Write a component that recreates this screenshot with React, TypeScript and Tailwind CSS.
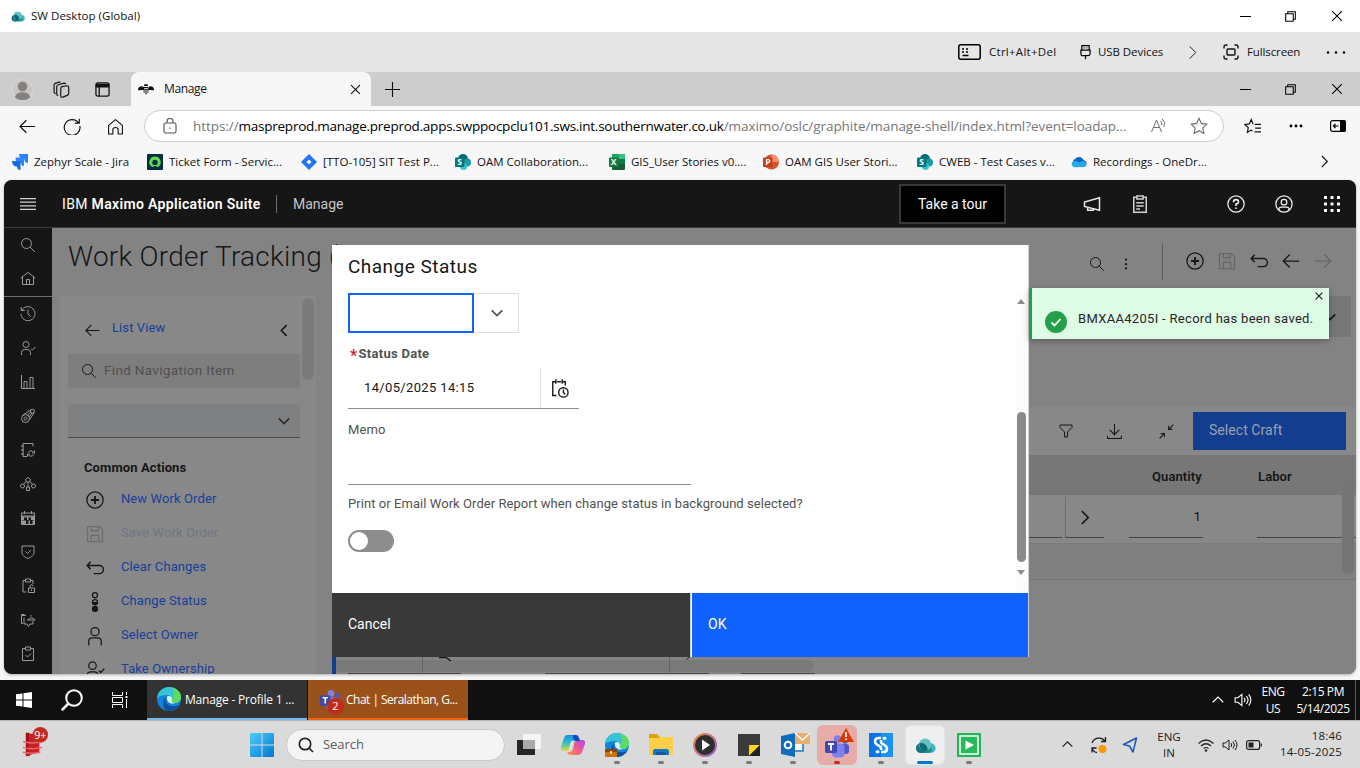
import React from "react";

type P = { className?: string; children?: React.ReactNode };

/* 32-unit line icon */
const L = ({ className = "size-5", w = 2, children }: P & { w?: number }) => (
  <svg viewBox="0 0 32 32" className={`shrink-0 ${className}`} fill="none" stroke="currentColor" strokeWidth={w}>
    {children}
  </svg>
);
/* 16-unit line icon */
const S = ({ className = "size-4", w = 1, children }: P & { w?: number }) => (
  <svg viewBox="0 0 16 16" className={`shrink-0 ${className}`} fill="none" stroke="currentColor" strokeWidth={w}>
    {children}
  </svg>
);

const Search = (p: P) => <L {...p}><circle cx="13" cy="13" r="10" /><path d="M20.5 20.5 29.5 29.5" /></L>;
const Home = (p: P) => <L {...p}><path d="M1.5 14 16 3 30.5 14M5 12v15h22V12M13 27V17h6v10" /></L>;
const History = (p: P) => <L {...p}><path d="M2.500 2v7h7M3.500 9A14 14 0 1 1 2 16M16 7v9l5.500 5.500" /></L>;
const UserCheck = (p: P) => <L {...p}><circle cx="12" cy="9" r="6" /><path d="M3 30v-5a6 6 0 0 1 6-6h6a6 6 0 0 1 6 6v5M22 17l3 3 6-6" /></L>;
const Bars = (p: P) => <L {...p}><path d="M3 2v27h27M8 29V15h6v14M20 29V7h6v22" /></L>;
const Rocket = (p: P) => <L {...p}><circle cx="11" cy="21" r="8" /><circle cx="11" cy="21" r="3" /><path d="M5 15 22 3.500M18.500 24 28.500 9" /><circle cx="25" cy="6.500" r="4" /><path d="M15 14l7-6M18 18l6-8" /></L>;
const NoteSync = (p: P) => <L {...p}><path d="M26 9V3H6v26h8M2 8h6M2 16h6M2 24h6M29 17v5h-5M15 29v-5h5M28 21a7 7 0 0 0-12 0M16 25a7 7 0 0 0 12 0" /></L>;
const Nodes = (p: P) => <L {...p}><path d="m16 3 5 4-2 5h-6l-2-5zM16 12v10M12 11l-5 6M20 11l5 6" /><circle cx="5" cy="20" r="4" /><circle cx="27" cy="20" r="4" /><path d="M13 22h6v7h-6z" /></L>;
const Calendar = (p: P) => (
  <L {...p}><path d="M3 6h26v23H3zM9 2v6M23 2v6M3 12h26" /><path d="M4 13h24v2H4zM4 15h4v5H4zM14 15h3v5h-3zM22 15h6v5h-6zM4 21h8v7H4zM17 21h3v7h-3zM25 21h3v7h-3z" fill="currentColor" stroke="none" /></L>
);
const Shield = (p: P) => <L {...p}><path d="M4 4h24v13c0 6-5 9-12 12C9 26 4 23 4 17zM11 15l4 4 7-7" /></L>;
const ClipLock = (p: P) => <L {...p}><path d="M13 28H6V5h5M21 5h5v7M11 2h10v6H11zM17 20h12v9H17zM20 20v-3a3 3 0 0 1 6-1M23 23v3" /></L>;
const ChatHat = (p: P) => <L {...p}><path d="M12 7H3v16h3M3 7v-2h6M8 11v13h6l3 5 3-5h6v-6M14 16h17M16 16a7 7 0 0 1 13 0M22 6v3" /></L>;
const ClipCheck = (p: P) => <L {...p}><path d="M11 5H5v24h22V5h-6M11 2h10v6H11zM11 18l4 4 7-7" /></L>;
const Clip = (p: P) => <L {...p} w={2.4}><path d="M11 5H6v24h20V5h-5M11 3h10v5H11zM10 14h12M10 19h12M10 24h6" /></L>;
const ArrowL = (p: P) => <L {...p}><path d="M29 16H4M14 5.500 3.500 16 14 26.500" /></L>;
const ArrowR = (p: P) => <L {...p}><path d="M3 16h25M18 5.500 28.500 16 18 26.500" /></L>;
const AddAlt = (p: P) => <L {...p}><circle cx="16" cy="16" r="13" /><path d="M16 9.500v13M9.500 16h13" strokeWidth="3" /></L>;
const Save = (p: P) => <L {...p}><path d="M5 4h18l5 5v19H4V5zM10 4v7h11V4M10 28V18h12v10" /></L>;
const Undo = (p: P) => <L {...p} w={2.300}><path d="M9 6 3.500 12 9 18M4 12h19a6 6 0 0 1 0 13h-9" /></L>;
const ChevL = (p: P) => <L {...p} w={3}><path d="M20 6 10 16l10 10" /></L>;
const ChevD = (p: P) => <L {...p} w={4}><path d="m4 10 12 12 12-12" /></L>;
const ChevR = (p: P) => <L {...p} w={3}><path d="m11 4 12 12-12 12" /></L>;
const X = (p: P & { w?: number }) => <S {...p}><path d="m2.500 2.500 11 11M13.500 2.500l-11 11" /></S>;

const Cloud = ({ className = "" }: P) => (
  <svg viewBox="0 0 24 18" className={`shrink-0 ${className}`}>
    <circle cx="18" cy="12" r="5.500" fill="#3fb5bd" />
    <rect x="3" y="10" width="16" height="7.500" rx="3.700" fill="#1e8e97" />
    <circle cx="6.500" cy="12" r="5.500" fill="#127580" />
    <circle cx="11.500" cy="8" r="7" fill="#62bfc4" />
    <path d="M5 6.500a7 7 0 0 1 9 8.500c-5 2-9-2-9-8.500z" fill="#0f6973" />
  </svg>
);
const Edge = ({ className = "" }: P) => (
  <svg viewBox="0 0 24 24" className={`shrink-0 ${className}`}>
    <circle cx="12" cy="12" r="12" fill="#1583d8" />
    <path d="M0 11C1 4 6 0 12 0c7 0 12 5 12 10 0 4-3 6-6 6-4 0-4-2-3-3 1-2-1-5-5-5-4 0-8 1-10 3z" fill="#36c4d8" />
    <path d="M15 .5c6 1.500 9 5.500 9 9.500s-3 6-6 6c-4 0-4-2-3-3 2-3 3-8 0-12.500z" fill="#5fdb60" />
    <path d="M9 10c-2 6 3 12 13 8-3 5-8 6-11 6-5-1-7-9-2-14z" fill="#0c4f9c" />
    <path d="M10 9.500c3-1.500 6 1 5 3.500-1 1 0 3 3 3-3 1.500-9 0-8-6.500z" fill="#d8f0fa" />
  </svg>
);
const Teams = ({ className = "" }: P) => (
  <svg viewBox="0 0 24 24" className={`shrink-0 ${className}`}>
    <circle cx="20" cy="7" r="2.800" fill="#4f57c9" /><circle cx="12.500" cy="5" r="3.800" fill="#7b83eb" />
    <rect x="16" y="10" width="8" height="10" rx="3" fill="#4f57c9" /><rect x="7" y="9.500" width="12.500" height="14" rx="4" fill="#7b83eb" />
    <rect x="0" y="7" width="12" height="12" rx="1.500" fill="#4049b0" />
    <path d="M3 10h6M6 10v6.500" stroke="#fff" strokeWidth="1.800" />
  </svg>
);
const Win = ({ className = "" }: P) => (
  <svg viewBox="0 0 24 24" className={`shrink-0 ${className}`}>
    <defs><linearGradient id="wn" x1="0" y1="0" x2="1" y2="1"><stop stopColor="#4fcbf8" /><stop offset="1" stopColor="#0078d4" /></linearGradient></defs>
    <path d="M0 1Q0 0 1 0h10.500v11.500H0zM12.500 0H23q1 0 1 1v10.500H12.500zM0 12.500h11.500V24H1q-1 0-1-1zM12.500 12.500H24V23q0 1-1 1H12.500z" fill="url(#wn)" />
  </svg>
);
const Speaker = (p: P) => <S {...p}><path d="M1 6v4h2.500L7 13V3L3.500 6zM9 6q1.500 2 0 4M11 4.500q3 3.500 0 7M13 3q4 5 0 10" /></S>;

const JiraIcon = () => (
  <svg viewBox="0 0 16 16" className="size-4 shrink-0"><path d="M7 0h9v9c-2.500 0-3.500-1.500-3.500-3.500H11C9 5.500 7 3 7 0z" fill="#2684ff" /><path d="M3.500 3.500h8.500v8.500C9.500 12 9 10.500 9 9H7C5 9 3.500 6.500 3.500 3.500z" fill="#2f86f8" /><path d="M0 7h8.500v9C6 16 5 14.500 5 12.500H3.500C1.500 12 0 10 0 7z" fill="#1b6ae0" /></svg>
);
const TicketIcon = () => (
  <svg viewBox="0 0 16 16" className="size-4 shrink-0"><rect width="16" height="16" rx="1" fill="#032d42" /><path d="M8 2.500a5.700 5.700 0 0 0-4.200 9.600q.8 1.200 2 .6 1-.7 2.200-.7t2.200.7q1.200.6 2-.6A5.700 5.700 0 0 0 8 2.500z" fill="#62d84e" /><circle cx="8" cy="8.400" r="2.700" fill="#032d42" /></svg>
);
const JiraDiamond = () => (
  <svg viewBox="0 0 16 16" className="size-4 shrink-0"><path d="M8 0l8 8-8 8-8-8z" fill="#2075f5" /><path d="M8 5.500 10.500 8 8 10.500 5.500 8z" fill="#f7f7f7" /></svg>
);
const Letter = ({ x, y, c }: { x: number; y: number; c: string }) => (
  <text x={x} y={y} fill="#fff" fontSize="8.500" fontWeight="700" fontFamily="Open Sans, sans-serif" textAnchor="middle">{c}</text>
);
const SharePoint = () => (
  <svg viewBox="0 0 16 16" className="size-4 shrink-0"><circle cx="8" cy="5" r="5" fill="#036c70" /><circle cx="12" cy="8.500" r="4" fill="#1a9ba1" /><circle cx="8.500" cy="12.500" r="3.500" fill="#37c6d0" /><rect y="3.500" width="9.500" height="9.500" rx="1" fill="#03787c" /><Letter x={4.700} y={11.300} c="S" /></svg>
);
const Excel = () => (
  <svg viewBox="0 0 16 16" className="size-4 shrink-0"><rect x="3" width="13" height="16" rx="1" fill="#185c37" /><path d="M3 0h7v5H3z" fill="#21a366" /><path d="M10 0h6v5h-6z" fill="#33c481" /><path d="M10 5h6v5h-6z" fill="#107c41" /><rect y="3.500" width="9.500" height="9.500" rx="1" fill="#107c41" /><Letter x={4.700} y={11.300} c="X" /></svg>
);
const Ppt = () => (
  <svg viewBox="0 0 16 16" className="size-4 shrink-0"><circle cx="8.500" cy="8" r="7.500" fill="#d35230" /><path d="M8.500.5A7.500 7.500 0 0 1 16 8H8.500z" fill="#ff8f6b" /><rect y="3.500" width="9.500" height="9.500" rx="1" fill="#c43e1c" /><Letter x={4.900} y={11.300} c="P" /></svg>
);
const OneDrive = () => (
  <svg viewBox="0 0 16 16" className="size-4 shrink-0"><path d="M3 11a3.500 3.500 0 0 1 1-6 5 5 0 0 1 8.500 1 3.500 3.500 0 0 1 2 6z" fill="#0a66c2" /><path d="M3.300 13.200a3.200 3.200 0 0 1-1-6Q5 6 8 8.500l4-1.500a3.200 3.200 0 0 1 1.500 6z" fill="#28a8ea" /></svg>
);

const bookmarks: { icon: React.ReactNode; text: string; cls: string }[] = [
  { icon: <JiraIcon />, text: "Zephyr Scale - Jira", cls: "w-[135px]" },
  { icon: <TicketIcon />, text: "Ticket Form - Servic...", cls: "w-[154px]" },
  { icon: <JiraDiamond />, text: "[TTO-105] SIT Test P...", cls: "w-[154px]" },
  { icon: <SharePoint />, text: "OAM Collaboration...", cls: "w-[154px]" },
  { icon: <Excel />, text: "GIS_User Stories v0....", cls: "w-[154px]" },
  { icon: <Ppt />, text: "OAM GIS User Stori...", cls: "w-[154px]" },
  { icon: <SharePoint />, text: "CWEB - Test Cases v...", cls: "w-[154px]" },
  { icon: <OneDrive />, text: "Recordings - OneDr...", cls: "w-[154px]" },
];

const WindowButtons = () => (
  <div className="flex w-[138px] items-center justify-around text-black">
    <S className="size-[11px]" w={1.500}><path d="M0 8h16" /></S>
    <S className="size-[11px]" w={1.500}><path d="M1 4h11v11H1zM4 4V1h11v11h-3" /></S>
    <X className="size-[14px]" w={1.200} />
  </div>
);

const TopBars = () => (
  <>
    <div className="flex h-8 items-center justify-between bg-white">
      <div className="flex items-center gap-[6px] pl-[11px]">
        <Cloud className="h-[11px] w-[14px]" />
        <span className="text-[11.500px] tracking-[0.030px]">SW Desktop (Global)</span>
      </div>
      <div className="-mr-px flex"><WindowButtons /></div>
    </div>
    <div className="flex h-10 items-center bg-[#e5e5e5] pl-[958px] text-[11.500px]">
      <svg viewBox="0 0 23 16" className="h-4 w-[23px]" fill="none" stroke="#000" strokeWidth="1.500"><rect x=".8" y=".8" width="21.400" height="14.400" rx="2" /><path d="M4 5h2M8 5h2M4 8h2M8 8h2M4.500 11.500h6" /></svg>
      <span className="ml-[8px] w-[91px] tracking-[0.270px]">Ctrl+Alt+Del</span>
      <svg viewBox="0 0 12 16" className="h-4 w-[11px]" fill="none" stroke="#000" strokeWidth="1.300"><path d="M2 6V1h8v5M1 6h10v4q0 2-2 2H3q-2 0-2-2zM6 12v4M4 3.500h1M7 3.500h1" /></svg>
      <span className="ml-[7px] w-[88px] tracking-[-0.070px]">USB Devices</span>
      <L className="-ml-px size-[15px]" w={2}><path d="m10 3 13 13-13 13" /></L>
      <S className="ml-[23px] size-4" w={1.400}><path d="M1 4.500V3q0-2 2-2h1.500M11.500 1H13q2 0 2 2v1.500M15 11.500V13q0 2-2 2h-1.500M4.500 15H3q-2 0-2-2v-1.500" /><rect x="4" y="5" width="8" height="6" rx="1" /></S>
      <span className="ml-[8px] w-[79px] tracking-[-0.120px]">Fullscreen</span>
      <svg viewBox="0 0 20 4" className="h-1 w-5"><circle cx="2" cy="2.500" r="1.200" /><circle cx="10" cy="2.500" r="1.200" /><circle cx="18" cy="2.500" r="1.200" /></svg>
    </div>
  </>
);

const Browser = () => (
  <>
    <div className="flex h-[34px] bg-[#cdcdcd]">
      <div className="flex w-[131px] items-center pl-[12px]">
        <svg viewBox="0 0 22 22" className="size-[21px]"><circle cx="11" cy="11" r="10.500" fill="#c9c6c3" stroke="#d9d9d9" /><circle cx="11" cy="8" r="5" fill="#85817e" /><path d="M3 19q1-5 8-5t8 5q-3 3-8 3t-8-3z" fill="#85817e" /></svg>
        <S className="ml-[20px] size-[17px]" w={1.100}><path d="M7.500 5.500 13 4.500q1.800 0 1.800 1.500v5.500q0 1.500-1.500 2l-4 1.700q-2 .5-2-1.500V7q0-1.500 1.500-1.800M5 13.500q-1.800 0-1.500-2V5.500q0-1.500 1.500-2l5.500-1.500q1.500 0 1.500 1M2.500 12Q.8 11.500 1 9.500V4q0-1.500 1.500-2L7 .8" /></S>
        <S className="ml-[25px] size-[15px]" w={1.400}><rect x="1" y="1" width="14" height="14" rx="2" /><path d="M1 3h14M1 4.500h14" strokeWidth="2.500" /><path d="M4.500 4v11" /></S>
      </div>
      <div className="flex w-[240px] items-center rounded-t-lg bg-[#f7f7f7] pl-[7px]">
        <svg viewBox="0 0 16 12" className="h-3 w-4" fill="#111"><path d="M0 6Q1 2 6 4v2Q3 8 0 7zM16 6q-1-4-6-2v2q3 2 6 1zM6 2q2-2 4 0v1H6zM5.500 4h5v1.200h-5zM5 6.200h6v1.200H5zM5.500 8.400h5v1h-5zM7 10.200h2l-1 1.500z" /></svg>
        <span className="ml-[10px] w-[185px] text-[12px] tracking-[-0.350px]">Manage</span>
        <X className="size-[13px]" w={1.400} />
      </div>
      <S className="ml-[14px] mt-[10px] size-[15px]" w={1.200}><path d="M8 0v16M0 8h16" /></S>
      <div className="-mr-px ml-auto flex"><WindowButtons /></div>
    </div>
    <div className="flex h-10 items-center bg-[#f7f7f7] pl-[18px]">
      <ArrowL className="size-[19px]" />
      <S className="ml-[26px] size-[18px]" w={1.050}><path d="M14 5.500A7 7 0 1 0 15 8M14.500 1.500V5.500h-4" /></S>
      <S className="ml-[26px] size-[17px]" w={1.050}><path d="M1.500 7 8 1.500 14.500 7v8h-4v-4q0-2-2.500-2t-2.500 2v4h-4z" strokeLinejoin="round" /></S>
      <div className="ml-[20px] flex h-8 w-[1080px] items-center rounded-full border border-[#cfcfcf] bg-white pl-[17px]">
        <S className="size-[16px] text-[#555]" w={1.100}><rect x="2" y="5" width="12" height="10" rx="1.500" /><path d="M5 5V3.500q0-3 3-3t3 3V5M8 9.500v1.500" /></S>
        <span className="ml-[15px] w-[958px] whitespace-nowrap text-[13.500px] tracking-[-0.060px] text-[#767676]">https://<span className="tracking-[-0.250px] text-black">maspreprod.manage.preprod.apps.swppocpclu101.sws.int.southernwater.co.uk</span>/maximo/oslc/graphite/manage-shell/index.html?event=loadap...</span>
        <svg viewBox="0 0 16 16" className="size-4 shrink-0" fill="none" stroke="#6b6b6b"><path d="M.5 14 5.500 2l5 12M2.500 9.500h6M9.500 3q2 1.500 1 4M11 .8q4 3 2 8M13 0" /></svg>
        <S className="ml-[23px] size-[18px] text-[#6b6b6b]"><path d="m8 1.200 2.100 4.500 4.900.6-3.600 3.400.9 4.900L8 12.200l-4.300 2.400.9-4.900L1 6.300l4.900-.6z" /></S>
      </div>
      <S className="ml-[20px] size-[17px]" w={1.100}><path d="M8.500 5.800 6.800 1.500 5 5.500.8 6l3.200 3-.8 4.600 3.600-2.200L8 12M10 6h6M10.500 9.500H16M10 13h6" /></S>
      <svg viewBox="0 0 14 4" className="ml-[28px] h-1 w-[14px]"><circle cx="2" cy="2" r="1.400" /><circle cx="7" cy="2" r="1.400" /><circle cx="12" cy="2" r="1.400" /></svg>
      <svg viewBox="0 0 16 12" className="ml-[27px] h-3 w-4"><rect x=".6" y=".6" width="14.800" height="10.800" rx="2" fill="none" stroke="#000" strokeWidth="1.200" /><path d="M10 0h4q2 0 2 2v8q0 2-2 2h-4z" /><path d="M8.500 6H3.500M5.500 4l-2 2 2 2" fill="none" stroke="#000" strokeWidth="1.200" /></svg>
    </div>
    <div className="flex h-[34px] items-center bg-[#f7f7f7] pb-[3px] pl-[12px]">
      {bookmarks.map((b) => (
        <div key={b.text} className={`flex items-center gap-[6px] ${b.cls}`}>
          {b.icon}
          <span className="whitespace-nowrap text-[11.500px] tracking-[0.010px]">{b.text}</span>
        </div>
      ))}
      <L className="ml-[92px] size-[15px]" w={2.500}><path d="m10 4 12 12-12 12" /></L>
    </div>
  </>
);

const AppHeader = () => (
  <div className="flex h-12 shrink-0 items-center border-b border-[#393939] bg-[#161616] pl-4 text-[14px] text-[#c6c6c6]">
    <svg viewBox="0 0 16 12" className="h-3 w-4 text-[#d0d0d0]" stroke="currentColor" strokeWidth="1.300"><path d="M0 .6h16M0 4.200h16M0 7.800h16M0 11.400h16" /></svg>
    <span className="ml-[26px] w-[214px] whitespace-nowrap pt-[2px] tracking-[0.340px] text-white">IBM <b className="font-semibold">Maximo Application Suite</b></span>
    <span className="h-[18px] w-px bg-[#6f6f6f]" />
    <span className="ml-4 w-[606px] pt-[2px]">Manage</span>
    <button className="flex h-10 w-[107px] items-center justify-center border-2 border-[#393939] bg-black pt-[2px] text-white">Take a tour</button>
    <L className="ml-[76px] size-5 text-[#e8e8e8]" w={2.400}><path d="M28 6v20L4 20v-7zM9 21v5h9v-3" /></L>
    <Clip className="ml-[28px] size-5 text-[#d0d0d0]" />
    <L className="ml-[76px] size-5 text-[#f0f0f0]"><circle cx="16" cy="16" r="13" /><path d="M12 13q0-4 4-4t4 3.500q0 3-4 3.500v3M16 21.500v2.500" strokeWidth="2.500" /></L>
    <L className="ml-[28px] size-5 text-[#f0f0f0]"><circle cx="16" cy="16" r="13" /><circle cx="16" cy="13" r="4.500" /><path d="M8 26v-2q0-3 4-3h8q4 0 4 3v2" /></L>
    <svg viewBox="0 0 16 16" className="ml-[30px] size-4" fill="#f4f4f4"><path d="M0 0h3v3H0zM6.500 0h3v3h-3zM13 0h3v3h-3zM0 6.500h3v3H0zM6.500 6.500h3v3h-3zM13 6.500h3v3h-3zM0 13h3v3H0zM6.500 13h3v3h-3zM13 13h3v3h-3z" /></svg>
  </div>
);

const railTop = [Search, Home];
const rail = [History, UserCheck, Bars, Rocket, NoteSync, Nodes, Calendar, Shield, ClipLock, ChatHat, ClipCheck];

const Rail = () => (
  <div className="w-12 shrink-0 bg-[#161616] text-[#9a9a9a]">
    {railTop.map((I, i) => <div key={i} className="flex h-[34px] items-center justify-center"><I className="size-4" /></div>)}
    <div className="h-px bg-[#6f6f6f]" />
    {rail.map((I, i) => <div key={i} className="flex h-[34px] items-center justify-center"><I className="size-4" /></div>)}
  </div>
);

const Status = (p: P) => <L {...p}><circle cx="16" cy="5" r="4" /><circle cx="16" cy="16" r="4" /><circle cx="16" cy="27" r="5" fill="currentColor" stroke="none" /><path d="M11 16h10a5 5 0 0 1-10 0z" fill="currentColor" stroke="none" /></L>;
const User = (p: P) => <L {...p}><circle cx="16" cy="9" r="6.500" /><path d="M6 31v-6q0-6 6-6h8q6 0 6 6v6" /></L>;

const actions: [React.FC<P>, string, string, string][] = [
  [AddAlt, "New Work Order", "text-[#161616]", "text-[#163f9c]"],
  [Save, "Save Work Order", "text-[#6c6c6c]", "text-[#6f7686]"],
  [Undo, "Clear Changes", "text-[#161616]", "text-[#163f9c]"],
  [Status, "Change Status", "text-[#161616]", "text-[#163f9c]"],
  [User, "Select Owner", "text-[#161616]", "text-[#163f9c]"],
  [UserCheck, "Take Ownership", "text-[#161616]", "text-[#163f9c]"],
];

const NavPanel = () => (
  <div className="flex w-[256px] shrink-0 overflow-hidden bg-[#888888]">
    <div className="w-[240px] pl-2 text-[13px] tracking-[0.100px]">
      <div className="flex h-[58px] items-center pl-4 pt-[6px]">
        <ArrowL className="mt-1 size-[17px]" />
        <span className="ml-[11px] w-[164px] text-[#163f9c]">List View</span>
        <ChevL className="mt-1 size-[17px]" />
      </div>
      <div className="flex h-[34px] items-center bg-[#7e7e7e] pb-[2px] pl-[13px] text-[13.500px] tracking-[0.330px] text-[#505050]">
        <Search className="mr-[7px] mt-[2px] size-[16px] text-[#161616]" />Find Navigation Item
      </div>
      <div className="mt-4 flex h-[34px] items-center justify-end border-b border-[#4c4c4c] bg-[#7f8082] pr-[9px]"><ChevD className="size-[14px] text-[#2c2c2c]" /></div>
      <div className="flex h-[44px] items-center pl-4 pt-[16px] font-bold text-[#161616]">Common Actions</div>
      {actions.map(([I, label, ic, tc]) => (
        <div key={label} className="flex h-[34px] items-center pl-[17px]">
          <I className={`mt-[1px] size-5 ${ic}`} />
          <span className={`ml-[16px] ${tc}`}>{label}</span>
        </div>
      ))}
    </div>
    <div className="ml-[2px] mt-[2px] h-[82px] w-3 rounded-full bg-[#7b7b7b]" />
  </div>
);

const Table = () => (
  <div className="ml-4 flex flex-1 flex-col">
    <div className="mr-[5px] flex h-[41px] items-center justify-end bg-[#767676] pr-[14px]"><ChevD className="size-[14px]" /></div>
    <div className="mt-[70px] flex h-12 items-center bg-[#888888] pl-[726px]">
      <L className="size-4"><path d="M4 4h24v5l-9 9v10h-6V18L4 9z" /></L>
      <L className="ml-[32px] size-[17px]"><path d="M16 2v20M7 13l9 9 9-9M3 24v5h26v-5" /></L>
      <L className="ml-[35px] size-[17px]"><path d="M29 3 20 12M20 5v7h7M3 29l9-9M12 27v-7H5" /></L>
      <div className="ml-[18px] flex h-[38px] w-[153px] items-center bg-[#133d8e] pb-px pl-4 text-[14px] tracking-[0.060px] text-[#9aa2b2]">Select Craft</div>
    </div>
    <div className="flex h-10 items-center bg-[#777777] pl-[820px] pt-1 text-[13px] font-semibold tracking-[0.100px] text-[#161616]">
      <span className="w-[106px]">Quantity</span><span>Labor</span>
    </div>
    <div className="flex h-[49px] items-start border-b border-[#7b7b7b] bg-[#888888] pl-[697px]">
      <div className="h-[43px] w-[33px] border-b border-[#444]" />
      <div className="ml-[3px] mt-0.5 flex h-[41px] w-[39px] items-center border-b border-l border-b-[#444] border-l-[#6f6f6f] pl-[10px]"><ChevR className="size-[17px]" /></div>
      <div className="ml-[25px] flex h-[43px] w-[74px] items-center justify-end border-b border-[#444] pr-[2px] text-[13.500px]">1</div>
      <div className="ml-[54px] h-[43px] flex-1 border-b border-[#444]" />
    </div>
    <div className="h-[36px] border-b border-[#73737b] bg-[#808080]" />
    <div className="mt-auto flex h-[17px] items-start bg-[#848484]">
      <div className="h-full w-1 bg-[#133d8e]" />
      <div className="mt-[3px] flex h-3 w-[478px] rounded-r-full bg-[#7a7a7a]">
        <div className="-mt-[3px] ml-3 flex h-[17px] w-[467px]">
          <div className="h-full w-[75px] border-b border-r border-b-[#444] border-r-[#666]" />
          <div className="flex h-full w-[38px] items-start border-b border-[#444] pl-4"><svg viewBox="0 0 14 4" className="h-1 w-[14px]" fill="none" stroke="#161616"><path d="M0 .5h7l5 3.500" strokeWidth="1.400" /></svg></div>
          <div className="ml-[84px] h-full w-[125px] border-b border-r border-b-[#444] border-r-[#666]" />
          <div className="h-full w-[39px] border-b border-[#444] pl-[16px]"><svg viewBox="0 0 4 3" className="h-[3px] w-1" stroke="#161616"><path d="M3.500 0 .5 2.500" /></svg></div>
          <div className="ml-8 h-full w-[74px] border-b border-[#444]" />
        </div>
      </div>
    </div>
  </div>
);

const Modal = () => (
  <div className="absolute left-[328px] top-[65px] flex h-[412px] w-[697px] flex-col border-r border-[#d0d0d0] bg-white text-[13px] text-[#525252]">
    <div className="flex h-12 items-start pl-4 pt-[8px] text-[19px] leading-7 tracking-[0.480px] text-[#161616]">Change Status</div>
    <div className="flex h-[300px]">
      <div className="w-[683px] pl-4">
        <div className="flex h-10">
          <div className="w-[126px] border-2 border-[#0f62fe]" />
          <div className="ml-[3px] flex w-[42px] items-center justify-center border border-l-0 border-[#e0e0e0] pr-[2px]"><ChevD className="size-[14px]" /></div>
        </div>
        <div className="mt-[11px] flex h-5 items-center pl-[2px] font-bold leading-5 tracking-[0.280px]"><span className="mr-[1px] mt-1 text-[16px] leading-5 text-[#da1e28]">*</span>Status Date</div>
        <div className="mt-1 flex h-[41px] w-[231px] border-b border-[#8d8d8d] text-[#161616]">
          <div className="flex w-[193px] items-center border-r border-[#e0e0e0] pl-4 tracking-[0.350px]">14/05/2025 14:15</div>
          <L className="ml-[8px] mt-[10px] size-5" w={2.200}><path d="M12 28H6V6h5M21 6h5v6M11 2v7M21 2v7M13 6h6" /><circle cx="23" cy="23" r="7.500" /><path d="M23 18.500V23l3 3" /></L>
        </div>
        <div className="mt-[11px] h-5 leading-5 tracking-[0.150px]">Memo</div>
        <div className="h-[45px] w-[343px] border-b border-[#8d8d8d]" />
        <div className="mt-[9px] h-5 whitespace-nowrap leading-5 tracking-[0.060px]">Print or Email Work Order Report when change status in background selected?</div>
        <div className="mt-[16px] h-[22px] w-[46px] rounded-full bg-[#8d8d8d] p-[2px]"><div className="size-[18px] rounded-full bg-white" /></div>
      </div>
      <div className="flex w-3 flex-col items-center bg-[#fcfcfc]">
        <svg viewBox="0 0 8 5" className="mt-[6px] h-[5px] w-2 shrink-0" fill="#8b8b8b"><path d="M4 0l4 5H0z" /></svg>
        <div className="mt-[108px] h-[150px] w-[9px] shrink-0 rounded-full bg-[#8b8b8b]" />
        <svg viewBox="0 0 8 5" className="mt-[8px] h-[5px] w-2 shrink-0" fill="#8b8b8b"><path d="M4 5L0 0h8z" /></svg>
      </div>
    </div>
    <div className="flex h-16 text-[14px] text-white">
      <div className="flex w-[359px] items-center border-r border-[#c6c6c6] bg-[#393939] pb-[2px] pl-4">Cancel</div>
      <div className="ml-px flex flex-1 items-center bg-[#0f62fe] pb-[2px] pl-4">OK</div>
    </div>
  </div>
);

const Toast = () => (
  <div className="absolute left-[1025px] top-[108px] flex h-[51px] w-[300px] border-l-[3px] border-[#24a148] bg-[#defbe6] shadow-[0_2px_6px_rgba(0,0,0,0.3)]">
    <svg viewBox="0 0 22 22" className="ml-[13px] mt-[23px] size-[22px]"><circle cx="11" cy="11" r="11" fill="#24a148" /><path d="m6.500 11.500 3 3 6-6.500" fill="none" stroke="#fff" strokeWidth="1.800" /></svg>
    <span className="ml-[11px] mt-[21px] w-[236px] shrink-0 whitespace-nowrap text-[13px] leading-5 tracking-[0.310px] text-[#262626]">BMXAA4205I - Record has been saved.</span>
    <X className="mt-[3px] size-[10px] shrink-0" w={1.700} />
  </div>
);

const Maximo = () => (
  <div className="flex h-[500px] flex-col bg-[#f7f7f7] px-1 pb-[6px] font-[Roboto,sans-serif]">
    <div className="relative flex flex-1 flex-col overflow-hidden rounded-lg bg-[#838383] text-[#161616] shadow-[0_1px_3px_rgba(0,0,0,0.3)]">
      <AppHeader />
      <div className="flex h-[446px]">
        <Rail />
        <div className="flex flex-1 flex-col">
          <div className="flex h-[68px] shrink-0 items-start">
            <div className="w-[990px] whitespace-nowrap pl-4 pt-[11px] text-[28px] font-light leading-9 tracking-[0.250px]">Work Order Tracking (</div>
            <div className="flex items-center pt-4">
              <Search className="ml-[47px] mt-1 size-4" />
              <svg viewBox="0 0 4 16" className="ml-[19px] mt-1 h-[14px] w-1"><path d="M1 2h2v2H1zM1 7h2v2H1zM1 12h2v2H1z" /></svg>
              <span className="ml-[34px] h-9 w-px bg-[#5c5c5c]" />
              <div className="-mt-[2px] ml-[22px] flex gap-3">
                <AddAlt /><Save className="size-5 text-[#666]" /><Undo /><ArrowL /><ArrowR className="size-5 text-[#666]" />
              </div>
            </div>
          </div>
          <div className="flex flex-1 overflow-hidden pl-2">
            <NavPanel />
            <Table />
          </div>
        </div>
      </div>
      <div className="absolute left-[1338px] top-[301px] h-[93px] w-3 rounded-full bg-[#747474]" />
      <Modal />
      <Toast />
    </div>
  </div>
);

const InnerTaskbar = () => (
  <div className="flex h-10 items-stretch bg-[#101010] text-[12px] text-white">
    <div className="flex w-[147px] items-center pl-4">
      <svg viewBox="0 0 16 16" className="size-4" fill="#fff"><path d="M0 2.300 6.500 1.400v6.100H0zM7.500 1.200 16 0v7.500H7.500zM0 8.500h6.500v6.100L0 13.700zM7.500 8.500H16V16l-8.500-1.200z" /></svg>
      <svg viewBox="0 0 22 22" className="ml-[29px] size-[22px]" fill="none" stroke="#fff" strokeWidth="2"><circle cx="13" cy="9" r="7.800" /><path d="M7.500 14.500.8 21.200" strokeWidth="2.500" /></svg>
      <svg viewBox="0 0 16 16" className="ml-[29px] size-4" fill="none" stroke="#fff"><path d="M.5 0v3.500h10V0M.5 16v-3.500h10V16M.5 5.500h10v5H.5zM14.500 0v3M14.500 7v9" /><path d="M13.500 4h2v2h-2z" fill="#fff" stroke="none" /></svg>
    </div>
    <div className="flex w-[160px] items-center border-b-2 border-[#76b9ed] bg-[#333333] pl-[10px]"><Edge className="size-6" /><span className="ml-1 whitespace-nowrap pt-[2px] tracking-[-0.200px]">Manage - Profile 1 ...</span></div>
    <div className="relative ml-px flex w-[160px] items-center border-b-2 border-[#f7630c] bg-[#9a511a] pl-[12px]">
      <Teams className="size-[21px]" />
      <span className="absolute left-[19px] top-[18px] flex size-[17px] items-center justify-center rounded-full bg-[#c42b1c] text-[11px]">2</span>
      <span className="ml-[5px] whitespace-nowrap pt-[2px] tracking-[-0.520px]">Chat | Seralathan, G...</span>
    </div>
    <div className="ml-auto flex items-center pb-px text-center text-[12px] leading-[17px] tracking-[-0.400px]">
      <S className="size-3" w={1.500}><path d="m1 11 7-7 7 7" /></S>
      <Speaker className="ml-[10px] size-[18px]" />
      <div className="ml-[9px] w-6">ENG<br />US</div>
      <div className="ml-[11px] w-[54px] whitespace-nowrap">2:15 PM<br />5/14/2025</div>
      <div className="ml-[5px] mr-1 mt-px h-10 w-px bg-[#5a5a5a]" />
    </div>
  </div>
);

const TaskItem = ({ children, dot = "bg-[#7a7a7a] w-[6px]", tile = "" }: P & { dot?: string; tile?: string }) => (
  <div className="relative flex h-12 w-11 items-center justify-center">
    <div className={`flex h-10 w-10 items-center justify-center rounded-md ${tile}`}>{children}</div>
    <span className={`absolute bottom-[5px] h-[3px] rounded-full ${dot}`} />
  </div>
);

const OuterTaskbar = () => (
  <div className="flex h-12 items-center border-t border-[#b5b5b5] bg-[#dadada]">
    <svg viewBox="0 0 28 32" className="-mt-1 ml-[19px] size-[31px]"><path d="M5 6h4v24H5z" fill="#a11217" /><path d="M9 7h10v19L6 30z" fill="#c62026" /><path d="M2 15q9 3 20 0M2 21q9 3 20 0M2 26q9 2 18 0" fill="none" stroke="#e56a6e" strokeWidth="1.500" /><circle cx="20" cy="8" r="8" fill="#c42b1c" /><text x="20" y="12" fill="#fff" fontSize="11" fontFamily="Open Sans, sans-serif" textAnchor="middle">9+</text></svg>
    <Win className="ml-[200px] size-[24px]" />
    <div className="ml-[12px] flex h-8 w-[219px] items-center rounded-full border border-[#cacaca] bg-[#f4f4f4] pl-[11px]">
      <S className="size-4 text-[#222]" w={1.700}><circle cx="7" cy="7" r="5.700" /><path d="m11 11 4 4" /></S>
      <span className="ml-[9px] text-[13px] tracking-[-0.050px] text-[#5c5c5c]">Search</span>
    </div>
    <div className="ml-[2px] flex">
      <TaskItem dot="hidden"><svg viewBox="0 0 24 24" className="size-6"><path d="M0 7h18v15H0z" fill="#262626" /><path d="M6 1h18v15H6z" fill="#f5f5f5" /><path d="M6 7h12v9H6z" fill="#aaa" /></svg></TaskItem>
      <TaskItem dot="hidden">
        <svg viewBox="0 0 24 24" className="size-6">
          <defs>
            <linearGradient id="cpa" x1="0" y1="0" x2="0" y2="1"><stop stopColor="#1a8be8" /><stop offset=".5" stopColor="#2fc4c4" /><stop offset="1" stopColor="#e8d63c" /></linearGradient>
            <linearGradient id="cpb" x1="1" y1="0" x2="0" y2="1"><stop stopColor="#a44df0" /><stop offset=".5" stopColor="#f05a8c" /><stop offset="1" stopColor="#fb9a48" /></linearGradient>
          </defs>
          <path d="M6 2h9q2 0 3 3l1 3h-4q-2 0-3 3l-1 4q-1 3-4 3H3q-4 0-3-4L3 5q1-3 3-3z" fill="url(#cpa)" />
          <path d="M18 22H9q-2 0-3-3h3q2 0 3-3l1-5q1-4 4-4h4q4 0 3 4l-3 8q-1 3-3 3z" fill="url(#cpb)" />
          <path d="M11 8h3q-1.500 1-2 3l-1 4q-.5 2-2 2h-2q1-1 1.500-3l1-4q.5-2 1.500-2z" fill="#e4e4e4" />
          <path d="M12 2h3q2 0 3 3l1 3h-4q-2 0-3-3z" fill="#1747c4" />
        </svg>
      </TaskItem>
      <TaskItem><svg viewBox="0 0 24 24" className="size-6"><foreignObject width="24" height="24"><Edge className="size-6" /></foreignObject><path d="M0 16h12v8H0z" fill="#c8720f" /><path d="M0 16h12v3H0z" fill="#8a4708" /><path d="M5 18h2v3H5z" fill="#ffd45c" /></svg></TaskItem>
      <TaskItem><svg viewBox="0 0 24 24" className="size-6"><path d="M0 1h8l3 3v5H0z" fill="#e0a008" /><path d="M0 6q0-1 1-1h8l2-1h12q1 0 1 1v16q0 1-1 1H1q-1 0-1-1z" fill="#ffcf48" /><path d="M4 18q0-2 2-2h12q2 0 2 2v4H4z" fill="#1378c8" /><path d="M7 19h10v3H7z" fill="#0b5a9c" /></svg></TaskItem>
      <TaskItem><svg viewBox="0 0 24 24" className="size-6"><defs><linearGradient id="mp" x1="0" y1="0" x2="1" y2="1"><stop stopColor="#f58a3c" /><stop offset="1" stopColor="#8e5bd0" /></linearGradient></defs><circle cx="12" cy="12" r="12" fill="url(#mp)" /><circle cx="12" cy="12" r="10" fill="#2e2e2e" /><path d="M9 6.500 17 12l-8 5.500z" fill="#fff" /></svg></TaskItem>
      <TaskItem><svg viewBox="0 0 24 24" className="size-6"><path d="M1 1h22v22H1z" fill="#3b3b3b" /><path d="M12 12h11L12 23z" fill="#ffd60a" /><path d="M23 12v11H12z" fill="#222" /></svg></TaskItem>
      <TaskItem><svg viewBox="0 0 30 24" className="ml-[6px] h-6 w-[30px] shrink-0"><path d="M12 8h10v10H12z" fill="#fff" stroke="#1976c5" strokeWidth="1.500" /><path d="M0 3 14 0v24L0 21z" fill="#0f6cbd" /><circle cx="7" cy="12" r="3.300" fill="none" stroke="#fff" strokeWidth="2" /><path d="M14 0h15v11H14z" fill="#e8b070" /><path d="m14 0 7.500 7L29 0" fill="none" stroke="#fff" strokeWidth="1.300" /></svg></TaskItem>
      <TaskItem dot="bg-[#c42b1c] w-[6px]" tile="bg-[#e8aca8]">
        <Teams className="mt-[2px] size-6" />
        <svg viewBox="0 0 16 14" className="absolute left-[23px] top-[7px] h-[14px] w-4"><path d="M8 0l8 14H0z" fill="#d83b01" /><path d="M8 4v5M8 10.500V12" stroke="#fff" strokeWidth="1.600" /></svg>
      </TaskItem>
      <TaskItem><svg viewBox="0 0 24 24" className="size-6"><path d="M0 0h24v24H0z" fill="#0b73e8" /><path d="M12 0h12v24H12z" fill="#1a93ee" /><g fill="none" stroke="#fff" strokeWidth="2.600"><path d="M12 5H9.500Q6 5 6 8.500q0 2 2.500 3.500l2 1.200q2 1.300 1.500 3.800M12 19h2.500q3.500 0 3.500-3.500 0-2-2.500-3.500l-2-1.200Q11.500 9.500 12 7" /><path d="M15 5.200h1M8 18.800h1" strokeWidth="3" strokeLinecap="round" /></g></svg></TaskItem>
      <TaskItem dot="bg-[#0078d4] w-4" tile="bg-[#efefef] border border-[#e5e5e5]"><Cloud className="mt-px h-[17px] w-[21px]" /></TaskItem>
      <TaskItem><svg viewBox="0 0 24 24" className="size-6"><path d="M0 0h24v24H0z" fill="#24b455" /><path d="M3 3h18v18H3z" fill="#28b95a" stroke="#fff" strokeWidth="1.600" /><path d="M8.500 7.500 17 12l-8.500 4.500z" fill="#fff" /></svg></TaskItem>
    </div>
    <div className="ml-auto flex items-center pr-[18px] text-[11.500px] text-[#1b1b1b]">
      <S className="size-[11px]" w={1.700}><path d="m1 11 7-7 7 7" /></S>
      <svg viewBox="0 0 18 18" className="ml-[17px] size-[18px]" fill="none" stroke="#222" strokeWidth="1.300"><path d="M2 7a7.500 7.500 0 0 1 13-2M15.500 1v4.500H11M2 16.500V12h4.500M2 12.500q2 4 5 4" /><circle cx="12.500" cy="13" r="4" fill="#ff9800" stroke="none" /></svg>
      <svg viewBox="0 0 16 16" className="ml-[14px] size-4" fill="none" stroke="#1b55b5" strokeWidth="1.500" strokeLinejoin="round"><path d="M14.500 1 1.500 7.500l6 1.500 3.500 6z" /></svg>
      <div className="ml-[18px] w-[26px] text-center leading-[16px]">ENG<br />IN</div>
      <svg viewBox="0 0 16 14" className="ml-[16px] h-[14px] w-4" fill="none" stroke="#222" strokeWidth="1.200"><path d="M.5 5.500q7.500-7 15 0M3 8q5-4.500 10 0M5.500 10.500q2.500-2 5 0" /><circle cx="8" cy="12.500" r="1.200" fill="#222" stroke="none" /></svg>
      <Speaker className="ml-[8px] size-4" />
      <svg viewBox="0 0 16 10" className="ml-[8px] h-[10px] w-4" fill="none" stroke="#222" strokeWidth="1.200"><rect x=".6" y=".6" width="13" height="8.800" rx="2" /><path d="M2.500 2.500h5v5h-5z" fill="#222" stroke="none" /><path d="M15.300 3.500v3" /></svg>
      <div className="ml-[14px] w-[66px] whitespace-nowrap pb-px text-right leading-[16px] tracking-[0.200px]">18:46<br />14-05-2025</div>
    </div>
  </div>
);

export default function App() {
  return (
    <div className="flex h-[768px] w-[1360px] flex-col overflow-hidden bg-[#f7f7f7] font-['Open_Sans',sans-serif] text-[#111]">
      <TopBars />
      <Browser />
      <Maximo />
      <InnerTaskbar />
      <OuterTaskbar />
    </div>
  );
}
